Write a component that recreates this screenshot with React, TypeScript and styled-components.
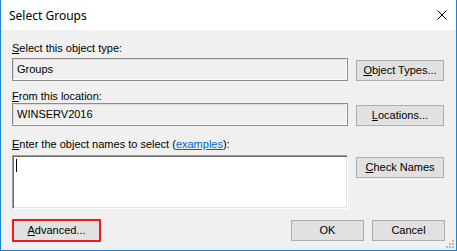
import React from 'react';
import styled, { createGlobalStyle } from 'styled-components';

const GlobalStyle = createGlobalStyle`
  html, body {
    margin: 0;
    padding: 0;
    background: #ffffff;
  }
`;

const Window = styled.div`
  position: relative;
  width: 457px;
  height: 251px;
  box-sizing: border-box;
  border: 1px solid #1883d7;
  border-top: none;
  background: #f0f0f0;
  display: flex;
  flex-direction: column;
  font-family: 'Liberation Sans', Arial, sans-serif;
  font-size: 11px;
  color: #000000;
  overflow: hidden;
`;

const TitleBar = styled.div`
  height: 30px;
  flex-shrink: 0;
  background: #ffffff;
  display: flex;
  align-items: center;
  justify-content: space-between;
  padding: 0 9px 0 8px;
`;

const Title = styled.div`
  font-family: 'Noto Sans', 'Open Sans', sans-serif;
  font-size: 12px;
  color: #000000;
`;

const CloseButton = styled.div`
  width: 10px;
  height: 10px;
  display: flex;
`;

const Body = styled.div`
  flex: 1;
  display: flex;
  flex-direction: column;
  padding: 12px 11px 0 11px;
`;

const Label = styled.div<{ $top: number; $bottom: number }>`
  line-height: 13px;
  margin-top: ${(p) => p.$top}px;
  margin-bottom: ${(p) => p.$bottom}px;
  white-space: nowrap;
`;

const Link = styled.span`
  color: #0066cc;
  text-decoration: underline;
`;

const FieldRow = styled.div`
  display: flex;
  align-items: flex-start;
  gap: 8px;
`;

const TextBox = styled.div<{ $height: number; $editable?: boolean }>`
  width: 336px;
  height: ${(p) => p.$height}px;
  box-sizing: border-box;
  border: 1px solid ${(p) => (p.$editable ? '#a0a0a0' : '#8c8c8c')};
  border-bottom-color: ${(p) => (p.$editable ? '#ffffff' : '#8c8c8c')};
  border-right-color: ${(p) => (p.$editable ? '#ffffff' : '#8c8c8c')};
  box-shadow: ${(p) =>
    p.$editable
      ? 'inset 1px 1px 0 #696969, inset -1px -1px 0 #e3e3e3'
      : 'inset -1px -1px 0 #ffffff, inset 1px 1px 0 #dcdcdc'};
  background: ${(p) => (p.$editable ? '#ffffff' : '#f0f0f0')};
  padding: 4px 3px 0 4px;
  line-height: 13px;
  white-space: nowrap;
`;

const Caret = styled.div`
  width: 1px;
  height: 13px;
  margin-top: -1px;
  margin-left: -1px;
  background: #000000;
`;

const Button = styled.div<{ $width: number; $offset?: number; $highlight?: boolean }>`
  width: ${(p) => p.$width}px;
  height: ${(p) => (p.$highlight ? 23 : 21)}px;
  margin-top: ${(p) => p.$offset ?? 0}px;
  box-sizing: border-box;
  border: ${(p) => (p.$highlight ? '2px solid #ed1c24' : '1px solid #adadad')};
  background: #e1e1e1;
  display: flex;
  align-items: center;
  justify-content: center;
  line-height: 13px;
  white-space: nowrap;
  flex-shrink: 0;
`;

const Footer = styled.div`
  display: flex;
  align-items: center;
  margin-top: 10px;
`;

const Spacer = styled.div`
  flex: 1;
`;

const FooterButtons = styled.div`
  display: flex;
  gap: 8px;
`;

const Grip = styled.svg`
  position: absolute;
  right: 1px;
  bottom: 1px;
`;

export default function App() {
  return (
    <>
      <GlobalStyle />
      <Window>
        <TitleBar>
          <Title>Select Groups</Title>
          <CloseButton>
            <svg width="10" height="10" viewBox="0 0 10 10">
              <path d="M0.5 0.5 L9.5 9.5 M9.5 0.5 L0.5 9.5" stroke="#000" strokeWidth="1" fill="none" />
            </svg>
          </CloseButton>
        </TitleBar>
        <Body>
          <Label $top={0} $bottom={3}>
            <u>S</u>elect this object type:
          </Label>
          <FieldRow>
            <TextBox $height={23}>Groups</TextBox>
            <Button $width={88} $offset={2}>
              <span>
                <u>O</u>bject Types...
              </span>
            </Button>
          </FieldRow>
          <Label $top={9} $bottom={0}>
            <u>F</u>rom this location:
          </Label>
          <FieldRow>
            <TextBox $height={23}>WINSERV2016</TextBox>
            <Button $width={88} $offset={2}>
              <span>
                <u>L</u>ocations...
              </span>
            </Button>
          </FieldRow>
          <Label $top={12} $bottom={4}>
            <u>E</u>nter the object names to select (<Link>examples</Link>):
          </Label>
          <FieldRow>
            <TextBox $height={54} $editable>
              <Caret />
            </TextBox>
            <Button $width={88} $offset={2}>
              <span>
                <u>C</u>heck Names
              </span>
            </Button>
          </FieldRow>
          <Footer>
            <Button $width={89} $highlight>
              <span>
                <u>A</u>dvanced...
              </span>
            </Button>
            <Spacer />
            <FooterButtons>
              <Button $width={73}>OK</Button>
              <Button $width={73}>Cancel</Button>
            </FooterButtons>
          </Footer>
        </Body>
        <Grip width="10" height="10" viewBox="0 0 10 10">
          <rect x="7" y="1" width="2" height="2" fill="#b8b8b8" />
          <rect x="4" y="4" width="2" height="2" fill="#b8b8b8" />
          <rect x="7" y="4" width="2" height="2" fill="#b8b8b8" />
          <rect x="1" y="7" width="2" height="2" fill="#b8b8b8" />
          <rect x="4" y="7" width="2" height="2" fill="#b8b8b8" />
          <rect x="7" y="7" width="2" height="2" fill="#b8b8b8" />
        </Grip>
      </Window>
    </>
  );
}
